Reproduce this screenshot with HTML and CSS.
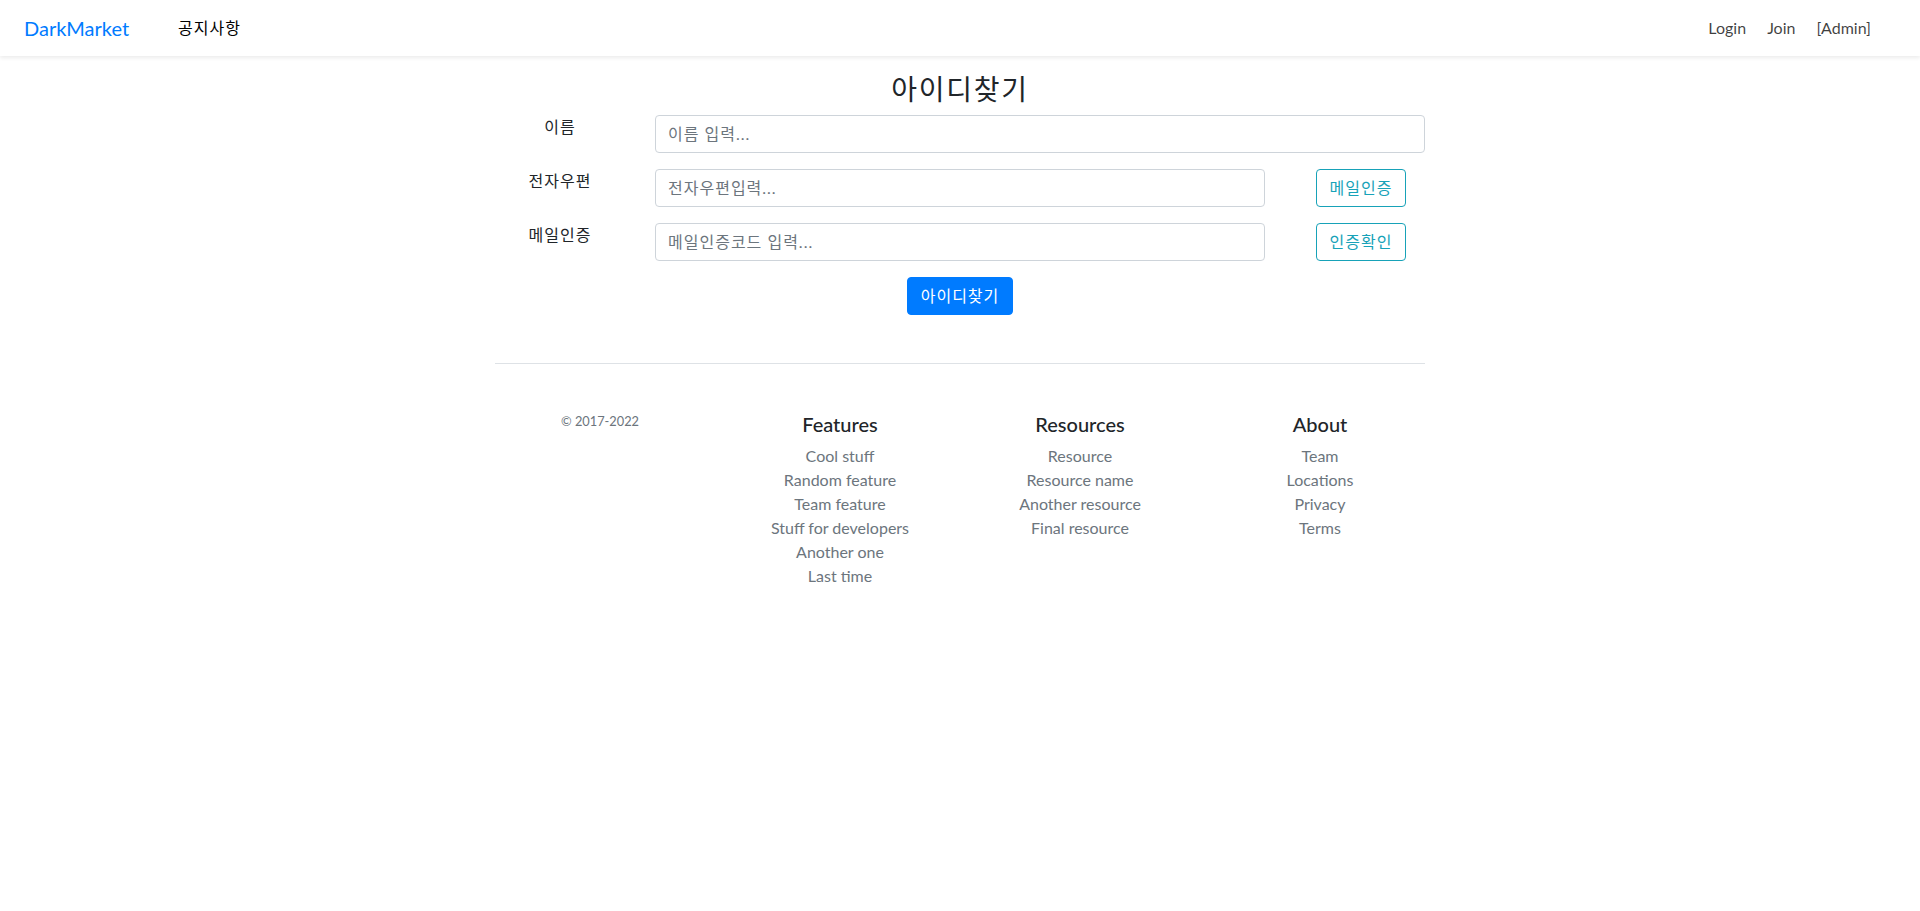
FILE: index.html
```html
<!DOCTYPE html>
<html lang="ko">
<head>
<meta charset="utf-8">
<title>아이디찾기</title>
<link rel="stylesheet" href="styles.css">
</head>
<body>
<nav class="navbar">
  <a class="brand" href="#">DarkMarket</a>
  <ul class="nav nav-left">
    <li><a class="nav-link nav-dark ko" href="#">공지사항</a></li>
  </ul>
  <ul class="nav nav-right">
    <li><a class="nav-link" href="#">Login</a></li>
    <li><a class="nav-link" href="#">Join</a></li>
    <li><a class="nav-link" href="#">[Admin]</a></li>
  </ul>
</nav>

<main class="container">
  <h3 class="title ko">아이디찾기</h3>
  <form class="find-form">
    <div class="form-row">
      <label class="form-label ko">이름</label>
      <input class="form-control ko" type="text" placeholder="이름 입력...">
    </div>
    <div class="form-row">
      <label class="form-label ko">전자우편</label>
      <input class="form-control ko" type="text" placeholder="전자우편입력...">
      <div class="action"><button type="button" class="btn btn-outline ko">메일인증</button></div>
    </div>
    <div class="form-row">
      <label class="form-label ko">메일인증</label>
      <input class="form-control ko" type="text" placeholder="메일인증코드 입력...">
      <div class="action"><button type="button" class="btn btn-outline ko">인증확인</button></div>
    </div>
    <div class="submit-row">
      <button type="button" class="btn btn-primary ko">아이디찾기</button>
    </div>
  </form>
</main>

<div class="container">
  <footer class="footer">
    <div class="footer-row">
      <div class="footer-col">
        <small class="copy">© 2017-2022</small>
      </div>
      <div class="footer-col">
        <h5 class="footer-title">Features</h5>
        <ul class="footer-list">
          <li><a href="#">Cool stuff</a></li>
          <li><a href="#">Random feature</a></li>
          <li><a href="#">Team feature</a></li>
          <li><a href="#">Stuff for developers</a></li>
          <li><a href="#">Another one</a></li>
          <li><a href="#">Last time</a></li>
        </ul>
      </div>
      <div class="footer-col">
        <h5 class="footer-title">Resources</h5>
        <ul class="footer-list">
          <li><a href="#">Resource</a></li>
          <li><a href="#">Resource name</a></li>
          <li><a href="#">Another resource</a></li>
          <li><a href="#">Final resource</a></li>
        </ul>
      </div>
      <div class="footer-col">
        <h5 class="footer-title">About</h5>
        <ul class="footer-list">
          <li><a href="#">Team</a></li>
          <li><a href="#">Locations</a></li>
          <li><a href="#">Privacy</a></li>
          <li><a href="#">Terms</a></li>
        </ul>
      </div>
    </div>
  </footer>
</div>
</body>
</html>
```

FILE: styles.css
```css
* { box-sizing: border-box; }

html, body {
  margin: 0;
  padding: 0;
}

body {
  font-family: Lato, "Noto Sans CJK KR", sans-serif;
  font-size: 16px;
  line-height: 1.5;
  color: #212529;
  background: #fff;
}

a { text-decoration: none; }

.ko { letter-spacing: 0.0625em; }

.navbar {
  display: flex;
  align-items: center;
  height: 56px;
  padding: 0 41px 0 24px;
  background: #fff;
  box-shadow: 0 2px 4px rgba(0, 0, 0, 0.08);
}

.brand {
  font-size: 20px;
  line-height: 30px;
  color: #007bff;
  margin-right: 41px;
}

.nav {
  display: flex;
  list-style: none;
  margin: 0;
  padding: 0;
}

.nav-right {
  margin-left: auto;
  gap: 5px;
}

.nav-link {
  display: block;
  padding: 8px;
  color: rgba(0, 0, 0, 0.75);
  font-size: 16px;
  line-height: 24px;
}

.nav-dark { color: #000; }

.container {
  width: 960px;
  margin: 0 auto;
  padding: 0 15px;
}

.title {
  margin: 17px 0 8px;
  text-align: center;
  font-size: 28px;
  font-weight: 400;
  line-height: 1.2;
}

.form-row {
  display: flex;
  align-items: flex-start;
  margin-bottom: 16px;
}

.form-label {
  width: 130px;
  margin-right: 30px;
  text-align: center;
  line-height: 24px;
}

.form-control {
  flex: 1;
  min-width: 0;
  height: 38px;
  padding: 6px 12px;
  font-family: inherit;
  font-size: 16px;
  color: #495057;
  border: 1px solid #ced4da;
  border-radius: 4px;
  background: #fff;
}

.form-control::placeholder { color: #6c757d; }

.action {
  width: 160px;
  padding-left: 51px;
}

.btn {
  display: inline-block;
  height: 38px;
  padding: 6px 12px;
  font-family: inherit;
  font-size: 16px;
  line-height: 24px;
  border: 1px solid transparent;
  border-radius: 4px;
  cursor: pointer;
  background: transparent;
}

.btn-outline {
  width: 90px;
  color: #17a2b8;
  border-color: #17a2b8;
}

.btn-primary {
  width: 106px;
  color: #fff;
  background: #007bff;
  border-color: #007bff;
}

.submit-row {
  display: flex;
  justify-content: center;
}

.footer {
  margin-top: 48px;
  padding-top: 48px;
  border-top: 1px solid #dee2e6;
}

.footer-row {
  display: flex;
  margin: 0 -15px;
}

.footer-col {
  flex: 1;
  padding: 0 15px;
  text-align: center;
}

.copy {
  display: block;
  font-size: 12.8px;
  color: #6c757d;
  margin-bottom: 16px;
}

.footer-title {
  margin: 0 0 8px;
  font-size: 20px;
  font-weight: 500;
  line-height: 1.2;
}

.footer-list {
  list-style: none;
  margin: 0 0 16px;
  padding: 0;
}

.footer-list a { color: #6c757d; }
```
